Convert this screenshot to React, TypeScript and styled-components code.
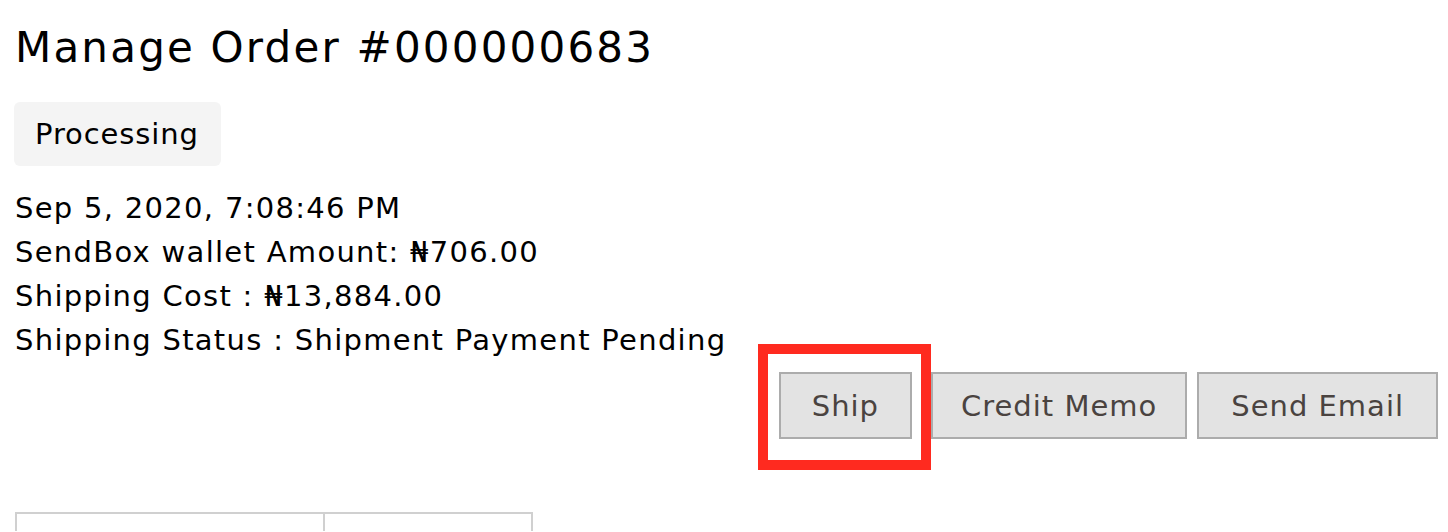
import React from "react";
import styled, { createGlobalStyle } from "styled-components";

const Global = createGlobalStyle`
  html, body { margin: 0; padding: 0; background: #fff; overflow: hidden; }
  body { font-family: "DejaVu Sans", "Open Sans", sans-serif; color: #000; }
`;

const Page = styled.div`
  padding: 0 10px 0 15px;
  display: flex;
  flex-direction: column;
`;

const Title = styled.h1`
  margin: 22px 0 0 0;
  font-size: 42px;
  font-weight: 400;
  line-height: 52px;
  letter-spacing: 2.2px;
`;

const Badge = styled.div`
  align-self: flex-start;
  margin: 28px 0 0 -1px;
  height: 64px;
  padding: 0 22px 0 21px;
  display: flex;
  align-items: center;
  background: #f4f4f4;
  border-radius: 6px;
  font-size: 29px;
  letter-spacing: 0.9px;
`;

const Info = styled.div`
  margin-top: 20px;
  display: flex;
  flex-direction: column;
`;

const Line = styled.div`
  font-size: 29px;
  line-height: 44px;
  letter-spacing: 1.3px;
  white-space: nowrap;
`;

const Actions = styled.div`
  margin-top: 10px;
  display: flex;
  justify-content: flex-end;
  gap: 10px;
`;

const Button = styled.button<{ $pad?: number }>`
  height: 67px;
  padding: 0 ${(p) => p.$pad ?? 32}px;
  background: #e3e3e3;
  border: 2px solid #acacac;
  color: #4a4340;
  font-family: inherit;
  font-size: 29px;
  letter-spacing: 1px;
  box-sizing: border-box;
  white-space: nowrap;
`;

const Highlight = styled.span`
  position: relative;
  display: inline-flex;
  margin-right: 9px;
  &::after {
    content: "";
    position: absolute;
    left: -21px;
    right: -19px;
    top: -28px;
    bottom: -31px;
    border: 10px solid #ff2a1f;
    pointer-events: none;
  }
`;

const Table = styled.div`
  margin-top: 73px;
  display: flex;
  align-self: flex-start;
`;

const Cell = styled.div<{ $w: number }>`
  width: ${(p) => p.$w}px;
  height: 19px;
  border: 2px solid #d0d0d0;
  border-bottom: none;
  box-sizing: border-box;
  & + & { border-left: none; }
`;

export default function App() {
  return (
    <>
      <Global />
      <Page>
        <Title>Manage Order #000000683</Title>
        <Badge>Processing</Badge>
        <Info>
          <Line>Sep 5, 2020, 7:08:46 PM</Line>
          <Line>SendBox wallet Amount: ₦706.00</Line>
          <Line>Shipping Cost : ₦13,884.00</Line>
          <Line>Shipping Status : Shipment Payment Pending</Line>
        </Info>
        <Actions>
          <Highlight>
            <Button $pad={31}>Ship</Button>
          </Highlight>
          <Button $pad={28}>Credit Memo</Button>
          <Button>Send Email</Button>
        </Actions>
        <Table>
          <Cell $w={310} />
          <Cell $w={208} />
        </Table>
      </Page>
    </>
  );
}
